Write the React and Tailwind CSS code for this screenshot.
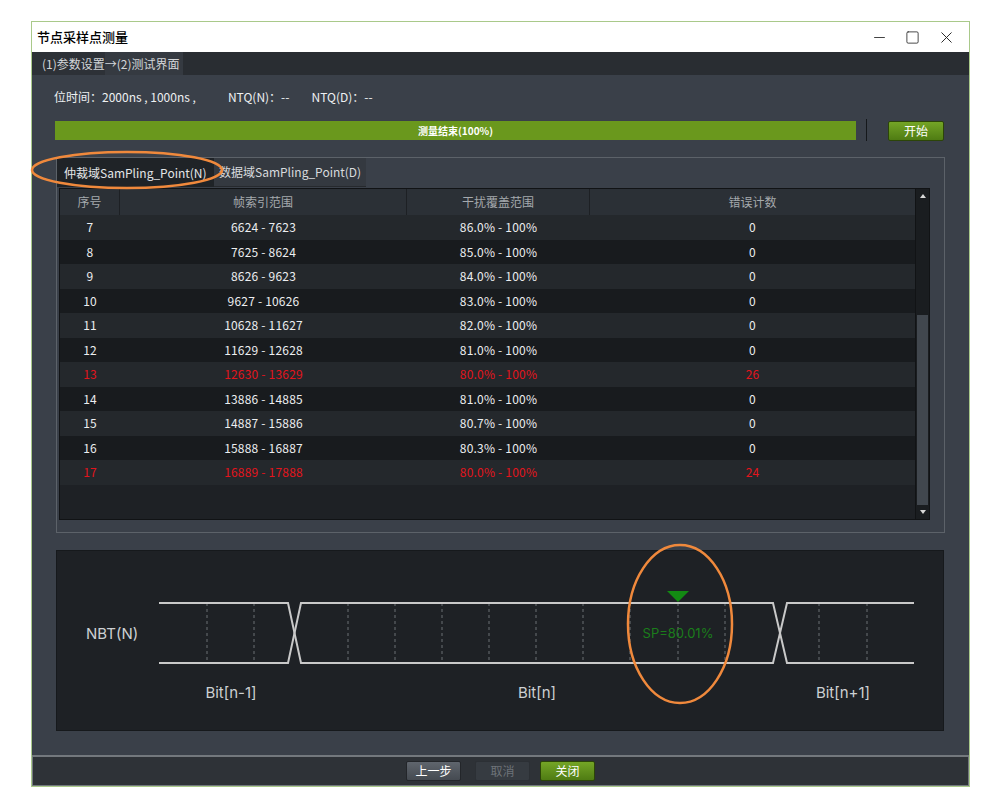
import React from 'react';
import { Minus, Square, X } from 'lucide-react';

const ROWS = [
  { n: 7, range: '6624 - 7623', cover: '86.0% - 100%', err: 0 },
  { n: 8, range: '7625 - 8624', cover: '85.0% - 100%', err: 0 },
  { n: 9, range: '8626 - 9623', cover: '84.0% - 100%', err: 0 },
  { n: 10, range: '9627 - 10626', cover: '83.0% - 100%', err: 0 },
  { n: 11, range: '10628 - 11627', cover: '82.0% - 100%', err: 0 },
  { n: 12, range: '11629 - 12628', cover: '81.0% - 100%', err: 0 },
  { n: 13, range: '12630 - 13629', cover: '80.0% - 100%', err: 26, bad: true },
  { n: 14, range: '13886 - 14885', cover: '81.0% - 100%', err: 0 },
  { n: 15, range: '14887 - 15886', cover: '80.7% - 100%', err: 0 },
  { n: 16, range: '15888 - 16887', cover: '80.3% - 100%', err: 0 },
  { n: 17, range: '16889 - 17888', cover: '80.0% - 100%', err: 24, bad: true },
];

const DASHES = [150, 197, 291, 338, 385, 432, 479, 526, 573, 621, 668, 762, 810];

function Waveform() {
  const top = 52;
  const bot = 112;
  return (
    <svg width="886" height="179" viewBox="0 0 886 179" className="block">
      {DASHES.map((x) => (
        <line key={x} x1={x} y1={top} x2={x} y2={bot} stroke="#6b7075" strokeWidth="1" strokeDasharray="3 3" />
      ))}
      <polyline
        points={`102,${top} 231,${top} 244,${bot} 716,${bot} 730,${top} 857,${top}`}
        fill="none" stroke="#c9c9c9" strokeWidth="2" />
      <polyline
        points={`102,${bot} 231,${bot} 244,${top} 716,${top} 730,${bot} 857,${bot}`}
        fill="none" stroke="#c9c9c9" strokeWidth="2" />
      <polygon points="610,40 632,40 621,51" fill="#138a13" />
      <text x="621" y="87" textAnchor="middle" fill="#1b7d1b" fontSize="13" fontFamily="Inter, 'Liberation Sans', sans-serif">SP=80.01%</text>
      <text x="29" y="88" fill="#cdd0d3" fontSize="15" fontFamily="Inter, 'Liberation Sans', sans-serif">NBT(N)</text>
      <text x="174" y="147" textAnchor="middle" fill="#cdd0d3" fontSize="15" fontFamily="Inter, 'Liberation Sans', sans-serif">Bit[n-1]</text>
      <text x="480" y="147" textAnchor="middle" fill="#cdd0d3" fontSize="15" fontFamily="Inter, 'Liberation Sans', sans-serif">Bit[n]</text>
      <text x="786" y="147" textAnchor="middle" fill="#cdd0d3" fontSize="15" fontFamily="Inter, 'Liberation Sans', sans-serif">Bit[n+1]</text>
    </svg>
  );
}

function GreenButton({ children, className = '' }) {
  return (
    <button className={`h-[20px] rounded-[2px] border border-[#2c4508] bg-gradient-to-b from-[#74a526] to-[#4f7c13] text-white text-[12px] leading-none ${className}`}>
      {children}
    </button>
  );
}

export default function App() {
  return (
    <div className="relative w-[1000px] h-[810px] bg-white overflow-hidden" style={{ fontFamily: '"Noto Sans CJK SC", "Microsoft YaHei", sans-serif' }}>
      <div className="pt-[21px] pl-[31px]">
        <div className="w-[939px] h-[766px] border border-[#a9c98a] flex flex-col">
          {/* title bar */}
          <div className="h-[30px] bg-white flex items-center pl-[5px] pr-[13px] shrink-0">
            <span className="text-[13px] text-black font-medium">节点采样点测量</span>
            <div className="ml-auto flex items-center gap-[17px] text-[#222]">
              <Minus size={17} strokeWidth={1.2} />
              <Square size={15} strokeWidth={1.3} />
              <X size={19} strokeWidth={1.2} />
            </div>
          </div>

          {/* step strip */}
          <div className="h-[23px] bg-[#292d32] flex items-stretch shrink-0 text-[12px] text-[#d3d6d9]">
            <div className="flex items-center pl-[10px] bg-[#2d3137]">(1)参数设置</div>
            <div className="flex items-center pr-[3px] bg-[#353a41]">→(2)测试界面</div>
          </div>

          {/* main body */}
          <div className="flex-1 bg-[#3a4049] flex flex-col">
            <div className="h-[46px] pt-[14px] pl-[22px] flex whitespace-pre text-[12px] leading-[16px] text-[#eef0f2]">
              <span>位时间：2000ns , 1000ns ,</span>
              <span className="ml-[32px]">NTQ(N)：--</span>
              <span className="ml-[22px]">NTQ(D)：--</span>
            </div>

            <div className="h-[20px] flex items-start pl-[23px]">
              <div className="w-[801px] h-[19px] bg-[#6a981d] flex items-center justify-center text-[10px] font-bold text-white">
                测量结束(100%)
              </div>
              <div className="ml-[10px] -mt-[2px] w-[1px] h-[22px] bg-[#15181b]" />
              <GreenButton className="ml-[21px] w-[56px]">开始</GreenButton>
            </div>

            {/* tab panel */}
            <div className="mt-[16px] ml-[24px] w-[889px] h-[376px] border border-[#5c6269] flex flex-col">
              <div className="h-[29px] flex items-stretch text-[12px] whitespace-nowrap">
                <div className="w-[157px] bg-[#1f2327] text-[#e4e6e8] flex items-center pl-[7px]">仲裁域SamPling_Point(N)</div>
                <div className="w-[152px] bg-[#343940] text-[#d8dbde] flex items-center pl-[5px] border-b border-[#26292d] overflow-hidden">数据域SamPling_Point(D)</div>
              </div>
              <div className="mt-[1px] ml-[2px] w-[871px] h-[332px] border border-[#111315] bg-[#1e2125] flex">
                <div className="flex-1 flex flex-col text-[12px]">
                  <div className="h-[26px] bg-[#2b3036] flex text-[#a5a9ad]">
                    <div className="w-[60px] flex items-center justify-center border-r border-[#1d2024]">序号</div>
                    <div className="w-[287px] flex items-center justify-center border-r border-[#1d2024]">帧索引范围</div>
                    <div className="w-[183px] flex items-center justify-center border-r border-[#1d2024]">干扰覆盖范围</div>
                    <div className="flex-1 flex items-center justify-center">错误计数</div>
                  </div>
                  {ROWS.map((r, i) => (
                    <div
                      key={r.n}
                      className={`h-[24.5px] flex tracking-[0.2px] ${i % 2 === 0 ? 'bg-[#24282c]' : 'bg-[#181b1e]'} ${r.bad ? 'text-[#e3141c]' : 'text-[#eceef0]'}`}
                    >
                      <div className="w-[60px] flex items-center justify-center">{r.n}</div>
                      <div className="w-[287px] flex items-center justify-center">{r.range}</div>
                      <div className="w-[183px] flex items-center justify-center">{r.cover}</div>
                      <div className="flex-1 flex items-center justify-center">{r.err}</div>
                    </div>
                  ))}
                </div>
                {/* scrollbar */}
                <div className="w-[14px] bg-[#1a1d20] flex flex-col border-l border-[#111315]">
                  <div className="h-[14px] flex items-center justify-center">
                    <div className="w-0 h-0 border-l-[3px] border-r-[3px] border-b-[4px] border-l-transparent border-r-transparent border-b-[#d8d8d8]" />
                  </div>
                  <div className="flex-1 flex flex-col justify-end px-[1px]">
                    <div className="h-[190px] bg-[#41474e]" />
                  </div>
                  <div className="h-[14px] flex items-center justify-center">
                    <div className="w-0 h-0 border-l-[3px] border-r-[3px] border-t-[4px] border-l-transparent border-r-transparent border-t-[#d8d8d8]" />
                  </div>
                </div>
              </div>
            </div>

            {/* waveform panel */}
            <div className="mt-[17px] ml-[24px] w-[888px] h-[181px] border border-[#16191c] bg-[#1e2125]">
              <Waveform />
            </div>
          </div>

          {/* bottom bar */}
          <div className="h-[31px] shrink-0 border-t-2 border-x border-b border-[#73787d] bg-[#2e3237] flex items-center justify-center gap-[14px] text-[12px]">
            <button className="w-[55px] h-[20px] rounded-[2px] border border-[#23262a] bg-gradient-to-b from-[#5f656d] to-[#454a51] text-white leading-none">上一步</button>
            <button className="w-[55px] h-[20px] rounded-[2px] border border-[#2c3035] bg-[#363b41] text-[#6e7379] leading-none">取消</button>
            <GreenButton className="w-[55px] -ml-[4px]">关闭</GreenButton>
          </div>
        </div>
      </div>

      {/* annotation ellipses */}
      <svg className="absolute inset-0 pointer-events-none" width="1000" height="810">
        <ellipse cx="127" cy="170" rx="95" ry="18" fill="none" stroke="#f0893c" strokeWidth="2.5" />
        <ellipse cx="680" cy="624" rx="52" ry="79" fill="none" stroke="#f0893c" strokeWidth="2.5" />
      </svg>
    </div>
  );
}
